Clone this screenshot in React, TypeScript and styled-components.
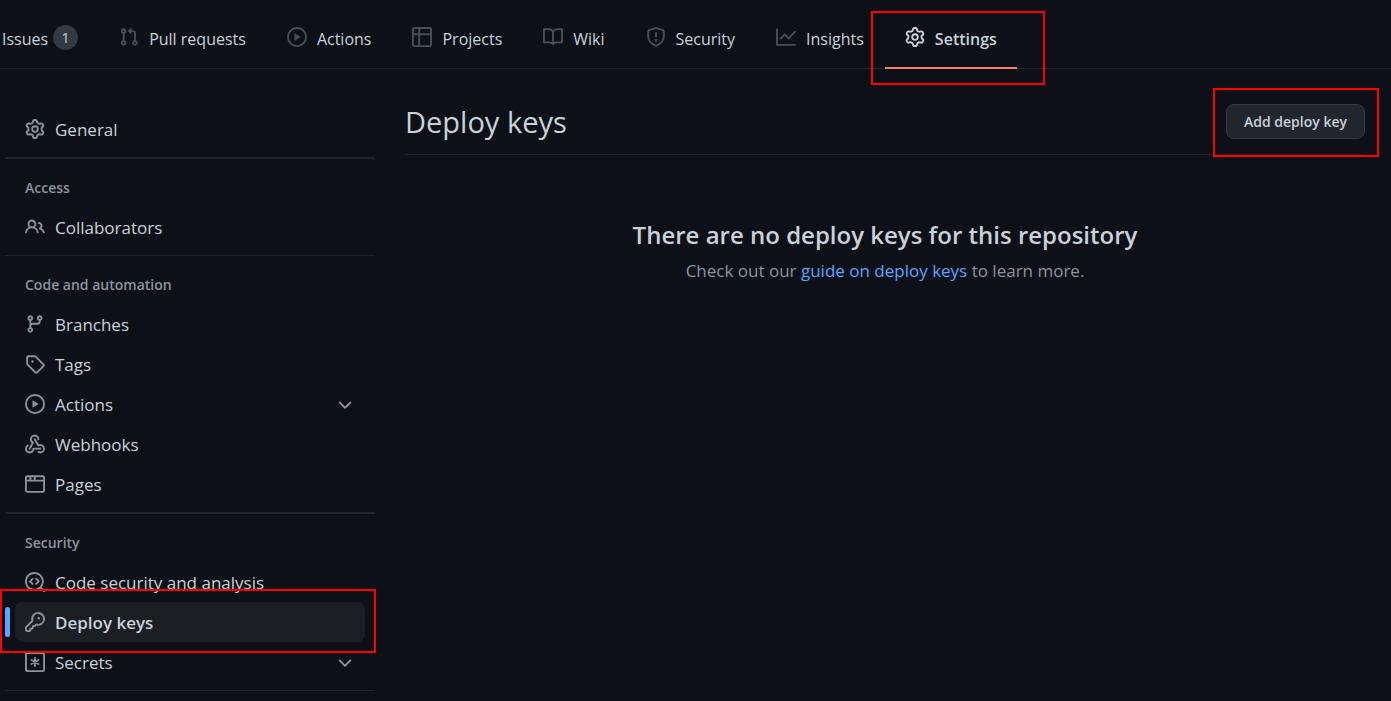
import React from "react";
import styled, { createGlobalStyle, css } from "styled-components";

const color = {
  canvas: "#0d1117",
  text: "#c9d1d9",
  muted: "#8b949e",
  subtle: "#484f58",
  border: "#21262d",
  accent: "#58a6ff",
  underline: "#f78166",
  mark: "#ff0000",
};

const GlobalStyle = createGlobalStyle`
  *, *::before, *::after { box-sizing: border-box; }
  body {
    margin: 0;
    min-height: 100vh;
    background: ${color.canvas};
    color: ${color.text};
    font-family: "Open Sans", "Noto Sans", sans-serif;
    font-size: 17px;
    line-height: 24px;
  }
`;

const icons = {
  pull: "M7.177 3.073L9.573.677A.25.25 0 0110 .854v4.792a.25.25 0 01-.427.177L7.177 3.427a.25.25 0 010-.354zM3.75 2.5a.75.75 0 100 1.5.75.75 0 000-1.5zm-2.25.75a2.25 2.25 0 113 2.122v5.256a2.251 2.251 0 11-1.5 0V5.372A2.25 2.25 0 011.5 3.25zM11 2.5h-1V4h1a1 1 0 011 1v5.628a2.251 2.251 0 101.5 0V5A2.5 2.5 0 0011 2.5zm1 10.25a.75.75 0 111.5 0 .75.75 0 01-1.5 0zM3.75 12a.75.75 0 100 1.5.75.75 0 000-1.5z",
  play: "M1.5 8a6.5 6.5 0 1113 0 6.5 6.5 0 01-13 0zM8 0a8 8 0 100 16A8 8 0 008 0zM6.379 5.227A.25.25 0 006 5.442v5.117a.25.25 0 00.379.214l4.264-2.559a.25.25 0 000-.428L6.379 5.227z",
  table: "M0 1.75C0 .784.784 0 1.75 0h12.5C15.216 0 16 .784 16 1.75v3.585a.746.746 0 010 .83v8.085A1.75 1.75 0 0114.25 16H6.309a.748.748 0 01-1.118 0H1.75A1.75 1.75 0 010 14.25V6.165a.746.746 0 010-.83V1.75zM1.5 6.5v7.75c0 .138.112.25.25.25H5v-8H1.5zM5 5H1.5V1.75a.25.25 0 01.25-.25H5V5zm1.5 1.5v8h7.75a.25.25 0 00.25-.25V6.5h-8zm8-1.5h-8V1.5h7.75a.25.25 0 01.25.25V5z",
  book: "M0 1.75A.75.75 0 01.75 1h4.253c1.227 0 2.317.59 3 1.501A3.744 3.744 0 0111.006 1h4.245a.75.75 0 01.75.75v10.5a.75.75 0 01-.75.75h-4.507a2.25 2.25 0 00-1.591.659l-.622.621a.75.75 0 01-1.06 0l-.622-.621A2.25 2.25 0 005.258 13H.75a.75.75 0 01-.75-.75V1.75zm8.755 3a2.25 2.25 0 012.25-2.25H14.5v9h-3.757c-.71 0-1.4.201-1.992.572l.004-7.322zm-1.504 7.324l.004-5.073-.002-2.253A2.25 2.25 0 005.003 2.5H1.5v9h3.757a3.75 3.75 0 011.994.574z",
  shield: "M7.467.133a1.75 1.75 0 011.066 0l5.25 1.68A1.75 1.75 0 0115 3.48V7c0 1.566-.32 3.182-1.303 4.682-.983 1.498-2.585 2.813-5.032 3.855a1.7 1.7 0 01-1.33 0c-2.447-1.042-4.049-2.357-5.032-3.855C1.32 10.182 1 8.566 1 7V3.48a1.75 1.75 0 011.217-1.667l5.25-1.68zm.61 1.429a.25.25 0 00-.153 0l-5.25 1.68a.25.25 0 00-.174.238V7c0 1.358.275 2.666 1.057 3.86.784 1.194 2.121 2.34 4.366 3.297a.2.2 0 00.154 0c2.245-.956 3.582-2.104 4.366-3.298C13.225 9.666 13.5 8.36 13.5 7V3.48a.25.25 0 00-.174-.237l-5.25-1.68zM8.75 4.75a.75.75 0 00-1.5 0v3a.75.75 0 001.5 0v-3zM9 10.5a1 1 0 11-2 0 1 1 0 012 0z",
  graph: "M1.5 1.75a.75.75 0 00-1.5 0v12.5c0 .414.336.75.75.75h14.5a.75.75 0 000-1.5H1.5V1.75zm14.28 2.53a.75.75 0 00-1.06-1.06L10 7.94 7.53 5.47a.75.75 0 00-1.06 0L3.22 8.72a.75.75 0 001.06 1.06L7 7.06l2.47 2.47a.75.75 0 001.06 0l5.25-5.25z",
  gear: "M7.429 1.525a6.593 6.593 0 011.142 0c.036.003.108.036.137.146l.289 1.105c.147.56.55.967.997 1.189.174.086.341.183.501.29.417.278.97.423 1.53.27l1.102-.303c.11-.03.175.016.195.046.219.31.41.641.573.989.014.031.022.11-.059.19l-.815.806c-.411.406-.562.957-.53 1.456a4.588 4.588 0 010 .582c-.032.499.119 1.05.53 1.456l.815.806c.08.08.073.159.059.19a6.494 6.494 0 01-.573.99c-.02.029-.086.074-.195.045l-1.103-.303c-.559-.153-1.112-.008-1.529.27-.16.107-.327.204-.5.29-.449.222-.851.628-.998 1.189l-.289 1.105c-.029.11-.101.143-.137.146a6.613 6.613 0 01-1.142 0c-.036-.003-.108-.037-.137-.146l-.289-1.105c-.147-.56-.55-.967-.997-1.189a4.502 4.502 0 01-.501-.29c-.417-.278-.97-.423-1.53-.27l-1.102.303c-.11.03-.175-.016-.195-.046a6.492 6.492 0 01-.573-.989c-.014-.031-.022-.11.059-.19l.815-.806c.411-.406.562-.957.53-1.456a4.587 4.587 0 010-.582c.032-.499-.119-1.05-.53-1.456l-.815-.806c-.08-.08-.073-.159-.059-.19a6.44 6.44 0 01.573-.99c.02-.029.086-.075.195-.045l1.103.303c.559.153 1.112.008 1.529-.27.16-.107.327-.204.5-.29.449-.222.851-.628.998-1.189l.289-1.105c.029-.11.101-.143.137-.146zM8 0c-.236 0-.47.01-.701.03-.743.065-1.29.615-1.458 1.261l-.29 1.106c-.017.066-.078.158-.211.224a5.994 5.994 0 00-.668.386c-.123.082-.233.09-.3.071L3.27 2.776c-.644-.177-1.392.02-1.82.63a7.977 7.977 0 00-.704 1.217c-.315.675-.111 1.422.363 1.891l.815.806c.05.048.098.147.088.294a6.084 6.084 0 000 .772c.01.147-.038.246-.088.294l-.815.806c-.474.469-.678 1.216-.363 1.891.2.428.436.835.704 1.218.428.609 1.176.806 1.82.63l1.103-.303c.066-.019.176-.011.299.071.213.143.436.272.668.386.133.066.194.158.212.224l.289 1.106c.169.646.715 1.196 1.458 1.26a8.094 8.094 0 001.402 0c.743-.064 1.29-.614 1.458-1.26l.29-1.106c.017-.066.078-.158.211-.224a5.98 5.98 0 00.668-.386c.123-.082.233-.09.3-.071l1.102.302c.644.177 1.392-.02 1.82-.63.268-.382.505-.789.704-1.217.315-.675.111-1.422-.364-1.891l-.814-.806c-.05-.048-.098-.147-.088-.294a6.1 6.1 0 000-.772c-.01-.147.039-.246.088-.294l.814-.806c.475-.469.679-1.216.364-1.891a7.992 7.992 0 00-.704-1.218c-.428-.609-1.176-.806-1.82-.63l-1.103.303c-.066.019-.176.011-.299-.071a5.991 5.991 0 00-.668-.386c-.133-.066-.194-.158-.212-.224L10.16 1.29C9.99.645 9.444.095 8.701.031A8.094 8.094 0 008 0zm1.5 8a1.5 1.5 0 11-3 0 1.5 1.5 0 013 0zM11 8a3 3 0 11-6 0 3 3 0 016 0z",
  people: "M5.5 3.5a2 2 0 100 4 2 2 0 000-4zM2 5.5a3.5 3.5 0 115.898 2.549 5.507 5.507 0 013.034 4.084.75.75 0 11-1.482.235 4.001 4.001 0 00-7.9 0 .75.75 0 01-1.482-.236A5.507 5.507 0 013.102 8.05 3.49 3.49 0 012 5.5zM11 4a.75.75 0 100 1.5 1.5 1.5 0 01.666 2.844.75.75 0 00-.416.672v.352a.75.75 0 00.574.73c1.2.289 2.162 1.2 2.522 2.372a.75.75 0 101.434-.44 5.01 5.01 0 00-2.56-3.012A3 3 0 0011 4z",
  branch: "M11.75 2.5a.75.75 0 100 1.5.75.75 0 000-1.5zm-2.25.75a2.25 2.25 0 113 2.122V6A2.5 2.5 0 0110 8.5H6a1 1 0 00-1 1v1.128a2.251 2.251 0 11-1.5 0V5.372a2.25 2.25 0 111.5 0v1.836A2.492 2.492 0 016 7h4a1 1 0 001-1v-.628A2.25 2.25 0 019.5 3.25zM4.25 12a.75.75 0 100 1.5.75.75 0 000-1.5zM3.5 3.25a.75.75 0 111.5 0 .75.75 0 01-1.5 0z",
  tag: "M2.5 7.775V2.75a.25.25 0 01.25-.25h5.025a.25.25 0 01.177.073l6.25 6.25a.25.25 0 010 .354l-5.025 5.025a.25.25 0 01-.354 0l-6.25-6.25a.25.25 0 01-.073-.177zm-1.5 0V2.75C1 1.784 1.784 1 2.75 1h5.025c.464 0 .91.184 1.238.513l6.25 6.25a1.75 1.75 0 010 2.474l-5.026 5.026a1.75 1.75 0 01-2.474 0l-6.25-6.25A1.75 1.75 0 011 7.775zM6 5a1 1 0 100 2 1 1 0 000-2z",
  webhook: "M5.5 4.25a2.25 2.25 0 014.5 0 .75.75 0 001.5 0 3.75 3.75 0 10-6.14 2.889l-2.272 4.258a.75.75 0 001.324.706L7 7.25a.75.75 0 00-.309-1.015A2.25 2.25 0 015.5 4.25zM7.364 3.607a.75.75 0 011.03.257l2.608 4.349a3.75 3.75 0 11-.628 6.785.75.75 0 01.752-1.299 2.25 2.25 0 10-.033-3.88.75.75 0 01-1.03-.256L7.107 4.636a.75.75 0 01.257-1.03zM2.9 8.776A.75.75 0 012.625 9.8 2.25 2.25 0 106 11.75a.75.75 0 01.75-.751h5.5a.75.75 0 010 1.5H7.425a3.751 3.751 0 11-5.55-3.998.75.75 0 011.024.274z",
  browser: "M0 2.75C0 1.784.784 1 1.75 1h12.5c.966 0 1.75.784 1.75 1.75v10.5A1.75 1.75 0 0114.25 15H1.75A1.75 1.75 0 010 13.25V2.75zm1.75-.25a.25.25 0 00-.25.25V4.5h2v-2H1.75zM5 2.5v2h2v-2H5zm3.5 0v2h6V2.75a.25.25 0 00-.25-.25H8.5zm6 3.5h-13v7.25c0 .138.112.25.25.25h12.5a.25.25 0 00.25-.25V6z",
  codescan: "M8.47 4.97a.75.75 0 000 1.06L9.94 7.5 8.47 8.97a.75.75 0 101.06 1.06l2-2a.75.75 0 000-1.06l-2-2a.75.75 0 00-1.06 0zM6.53 6.03a.75.75 0 00-1.06-1.06l-2 2a.75.75 0 000 1.06l2 2a.75.75 0 101.06-1.06L5.06 7.5l1.47-1.47zM12.246 13.307a7.5 7.5 0 111.06-1.06l2.474 2.473a.75.75 0 11-1.06 1.06l-2.474-2.473zM1.5 7.5a6 6 0 1110.386 4.094.75.75 0 00-.292.293A6 6 0 011.5 7.5z",
  key: "M6.5 5.5a4 4 0 112.731 3.795.75.75 0 00-.768.18L7.44 10.5H6.25a.75.75 0 00-.75.75v1.19l-.06.06H4.25a.75.75 0 00-.75.75v1.19l-.06.06H1.75a.25.25 0 01-.25-.25v-1.69l5.024-5.023a.75.75 0 00.181-.768A3.995 3.995 0 016.5 5.5zm4-5.5a5.5 5.5 0 00-5.348 6.788L.22 11.72a.75.75 0 00-.22.53v2C0 15.216.784 16 1.75 16h2a.75.75 0 00.53-.22l.5-.5a.75.75 0 00.22-.53V14h.75a.75.75 0 00.53-.22l.5-.5a.75.75 0 00.22-.53V12h.75a.75.75 0 00.53-.22l.932-.932A5.5 5.5 0 1010.5 0zm.5 6a1 1 0 100-2 1 1 0 000 2z",
  chevron: "M12.78 6.22a.75.75 0 010 1.06l-4.25 4.25a.75.75 0 01-1.06 0L3.22 7.28a.75.75 0 011.06-1.06L8 9.94l3.72-3.72a.75.75 0 011.06 0z",
};

type IconName = keyof typeof icons | "secret";

const Svg = styled.svg`
  flex: none;
  width: 20px;
  height: 20px;
  fill: currentColor;
`;

function Icon({ name }: { name: IconName }) {
  return (
    <Svg viewBox="0 0 16 16" aria-hidden="true">
      {name === "secret" ? (
        <g fill="none" stroke="currentColor" strokeWidth="1.5" strokeLinecap="round">
          <rect x="0.75" y="0.75" width="14.5" height="14.5" rx="1" />
          <path d="M8 4.8v6.4M5.2 6.4l5.6 3.2M10.8 6.4L5.2 9.6" />
        </g>
      ) : (
        <path fillRule="evenodd" d={icons[name]} />
      )}
    </Svg>
  );
}

/* Red outline laid over a part to call attention to it. */
const Callout = styled.span<{ $inset: string }>`
  position: absolute;
  inset: ${(p) => p.$inset};
  border: 2px solid ${color.mark};
  pointer-events: none;
  z-index: 1;
`;

const TabBar = styled.nav`
  display: flex;
  gap: 1px;
  height: 69px;
  border-bottom: 1px solid ${color.border};
`;

const Tab = styled.a<{ $first?: boolean; $current?: boolean }>`
  position: relative;
  display: flex;
  align-items: center;
  gap: ${(p) => (p.$first ? 5 : 10)}px;
  height: 69px;
  padding: 10px 20px 0 ${(p) => (p.$first ? 2 : 20)}px;
  border-bottom: 2px solid ${(p) => (p.$current ? color.underline : "transparent")};
  color: ${color.text};
  font-size: 16px;
  font-weight: ${(p) => (p.$current ? 600 : 400)};
  text-decoration: none;
  white-space: nowrap;

  ${Svg} {
    margin-bottom: 3px;
    color: ${(p) => (p.$current ? color.text : color.subtle)};
  }
`;

const Counter = styled.span`
  width: 25px;
  height: 25px;
  margin-bottom: 3px;
  border-radius: 13px;
  background: #343941;
  font-size: 15px;
  line-height: 25px;
  text-align: center;
`;

const Layout = styled.div`
  display: flex;
  gap: 30px;
  padding: 0 26px 0 5px;
`;

const Sidebar = styled.aside`
  flex: none;
  width: 370px;
  padding-top: 40px;
`;

const Section = styled.section<{ $rule?: number }>`
  padding-bottom: 8px;
  border-top: ${(p) => p.$rule ?? 0}px solid ${color.border};

  &:last-child {
    border-bottom: 1px solid ${color.border};
  }
`;

const SectionTitle = styled.h2`
  margin: 0;
  padding: 18px 20px 8px;
  color: ${color.muted};
  font-size: 14px;
  font-weight: 600;
  line-height: 22px;
`;

const itemStyle = css`
  display: flex;
  align-items: center;
  gap: 10px;
  width: 350px;
  height: 40px;
  margin: 0 10px;
  padding: 0 10px;
  border: 0;
  border-radius: 8px;
  background: none;
  color: ${color.text};
  font: inherit;
  text-align: left;
  text-decoration: none;

  ${Svg} {
    color: ${color.muted};
  }
`;

const ItemLink = styled.a<{ $current?: boolean }>`
  ${itemStyle}
  ${(p) =>
    p.$current &&
    css`
      position: relative;
      background: #1b1f23;
      font-weight: 600;

      &::before {
        content: "";
        position: absolute;
        left: -10px;
        top: 5px;
        width: 5px;
        height: 30px;
        border-radius: 3px;
        background: ${color.accent};
      }
    `}
`;

const ItemButton = styled.button`
  ${itemStyle}
`;

const ItemLabel = styled.span`
  flex: 1;
  padding-top: 1px;
`;

const Main = styled.main`
  flex: 1;
  min-width: 0;
  padding-top: 35px;
`;

const Subhead = styled.header`
  display: flex;
  justify-content: space-between;
  height: 51px;
  border-bottom: 1px solid ${color.border};
`;

const Title = styled.h1`
  margin: 0;
  font-size: 29px;
  font-weight: 400;
  line-height: 36px;
`;

const ActionWrap = styled.div`
  position: relative;
  height: 35px;
`;

const Action = styled.button`
  height: 35px;
  padding: 0 17px;
  border: 1px solid #363b42;
  border-radius: 8px;
  background: #21262d;
  color: ${color.text};
  font: inherit;
  font-size: 14px;
  font-weight: 600;
`;

const Blank = styled.div`
  padding-top: 61px;
  text-align: center;
`;

const BlankTitle = styled.h3`
  margin: 0 0 5px;
  font-size: 24px;
  font-weight: 600;
  line-height: 38px;
`;

const BlankText = styled.p`
  margin: 0;
  color: ${color.muted};

  a {
    color: ${color.accent};
    text-decoration: none;
  }
`;

const tabs: { icon: IconName; label: string }[] = [
  { icon: "pull", label: "Pull requests" },
  { icon: "play", label: "Actions" },
  { icon: "table", label: "Projects" },
  { icon: "book", label: "Wiki" },
  { icon: "shield", label: "Security" },
  { icon: "graph", label: "Insights" },
];

type Entry = { icon: IconName; label: string; expandable?: boolean; current?: boolean };

const sections: { title?: string; rule?: number; items: Entry[] }[] = [
  { items: [{ icon: "gear", label: "General" }] },
  { title: "Access", rule: 2, items: [{ icon: "people", label: "Collaborators" }] },
  {
    title: "Code and automation",
    rule: 1,
    items: [
      { icon: "branch", label: "Branches" },
      { icon: "tag", label: "Tags" },
      { icon: "play", label: "Actions", expandable: true },
      { icon: "webhook", label: "Webhooks" },
      { icon: "browser", label: "Pages" },
    ],
  },
  {
    title: "Security",
    rule: 2,
    items: [
      { icon: "codescan", label: "Code security and analysis" },
      { icon: "key", label: "Deploy keys", current: true },
      { icon: "secret", label: "Secrets", expandable: true },
    ],
  },
];

function Item({ icon, label, expandable, current }: Entry) {
  if (expandable) {
    return (
      <ItemButton type="button" aria-expanded={false}>
        <Icon name={icon} />
        <ItemLabel>{label}</ItemLabel>
        <Icon name="chevron" />
      </ItemButton>
    );
  }
  return (
    <ItemLink href="#" $current={current} aria-current={current ? "page" : undefined}>
      <Icon name={icon} />
      <ItemLabel>{label}</ItemLabel>
      {current && <Callout $inset="-13px -11px -11px -15px" />}
    </ItemLink>
  );
}

export default function App() {
  return (
    <>
      <GlobalStyle />
      <TabBar aria-label="Repository">
        <Tab href="#" $first>
          Issues <Counter>1</Counter>
        </Tab>
        {tabs.map((t) => (
          <Tab href="#" key={t.label}>
            <Icon name={t.icon} />
            {t.label}
          </Tab>
        ))}
        <Tab href="#" $current aria-current="page">
          <Icon name="gear" />
          Settings
          <Callout $inset="11px -28px -18px -14px" />
        </Tab>
      </TabBar>
      <Layout>
        <Sidebar>
          {sections.map((s, i) => (
            <Section key={i} $rule={s.rule}>
              {s.title && <SectionTitle>{s.title}</SectionTitle>}
              {s.items.map((item) => (
                <Item key={item.label} {...item} />
              ))}
            </Section>
          ))}
        </Sidebar>
        <Main>
          <Subhead>
            <Title>Deploy keys</Title>
            <ActionWrap>
              <Action type="button">Add deploy key</Action>
              <Callout $inset="-16px -14px -18px -13px" />
            </ActionWrap>
          </Subhead>
          <Blank>
            <BlankTitle>There are no deploy keys for this repository</BlankTitle>
            <BlankText>
              Check out our <a href="#">guide on deploy keys</a> to learn more.
            </BlankText>
          </Blank>
        </Main>
      </Layout>
    </>
  );
}
